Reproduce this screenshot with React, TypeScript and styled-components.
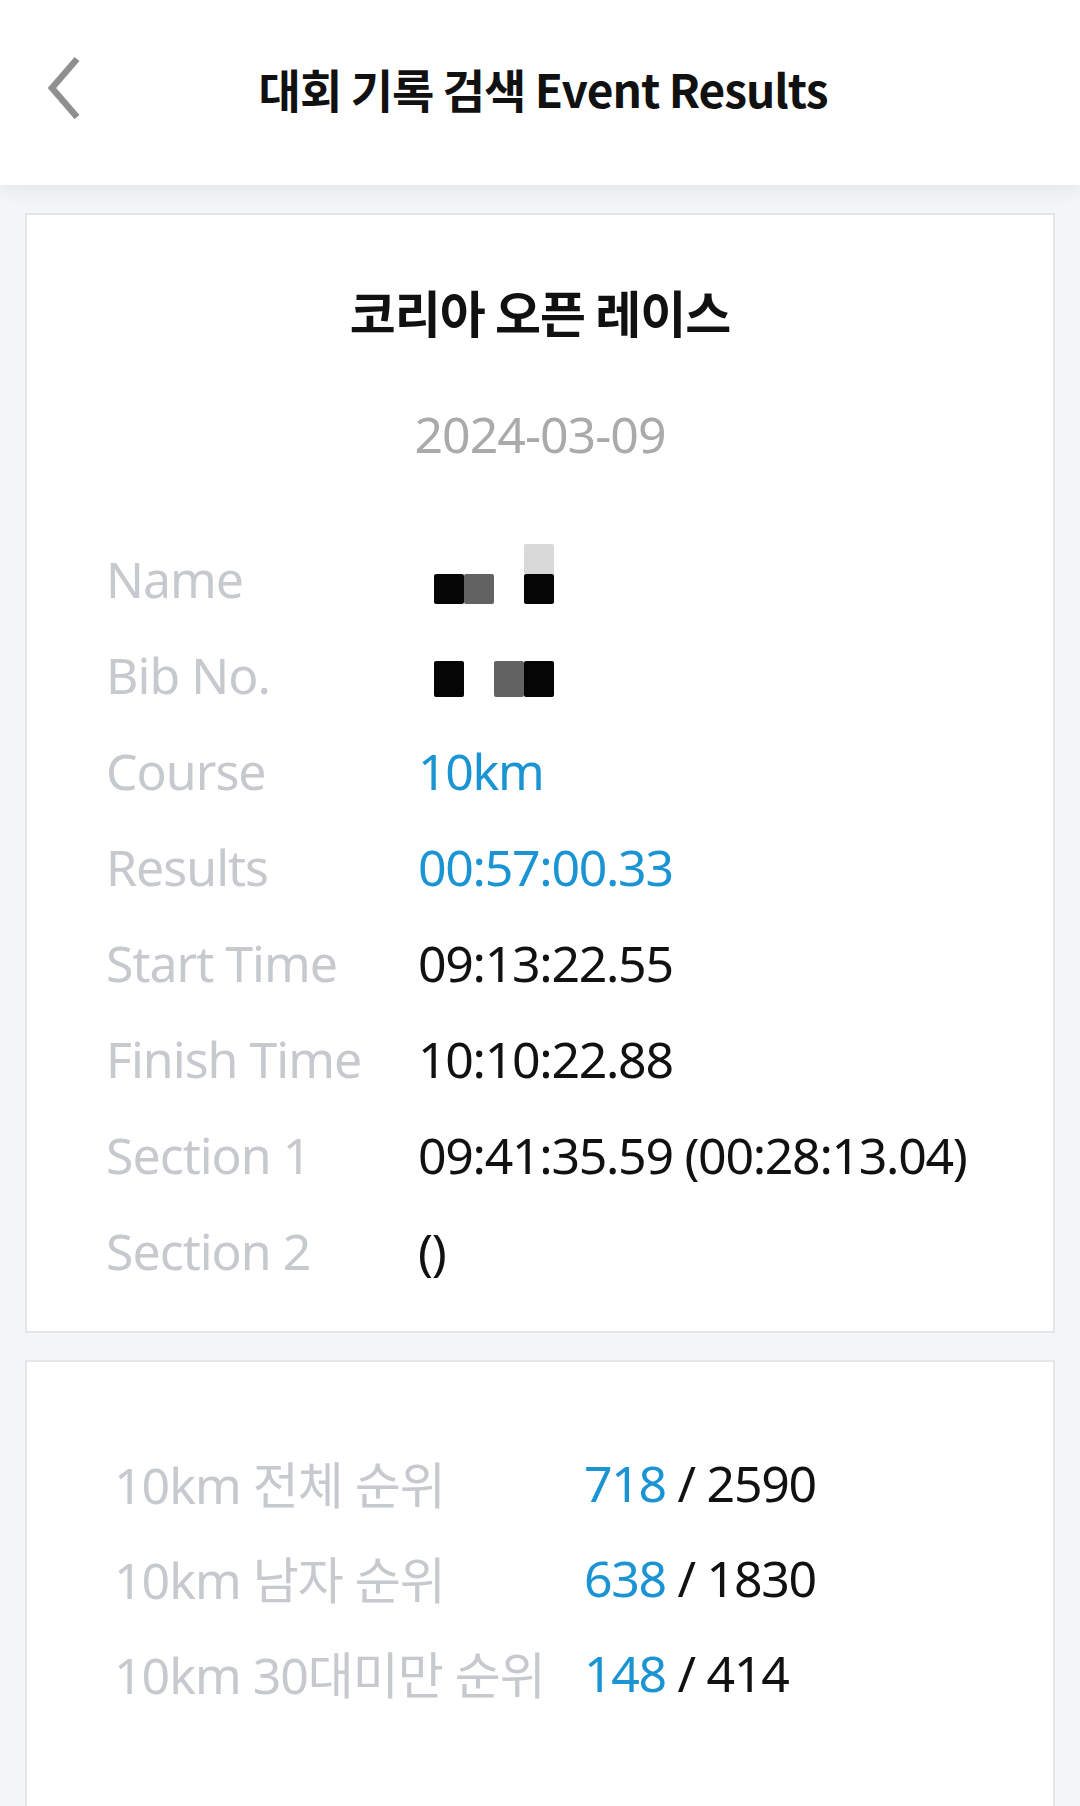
import React from "react";
import styled, { createGlobalStyle } from "styled-components";

const Global = createGlobalStyle`
  html, body { margin: 0; padding: 0; background: #f4f5f7; }
  body { font-family: "Noto Sans", "Noto Sans CJK KR", sans-serif; }
  * { box-sizing: border-box; }
`;

const Page = styled.div`
  width: 1080px;
  height: 1806px;
  overflow: hidden;
  background: #f4f5f7;
  display: flex;
  flex-direction: column;
  position: relative;
`;

const Header = styled.header`
  height: 185px;
  flex: none;
  background: #ffffff;
  display: flex;
  align-items: center;
  justify-content: center;
  padding-bottom: 10px;
  position: relative;
  z-index: 1;
  box-shadow: 0 6px 18px rgba(0, 0, 0, 0.06);
`;

const BackButton = styled.button`
  position: absolute;
  left: 38px;
  top: 50px;
  width: 52px;
  height: 74px;
  border: 0;
  padding: 0;
  background: transparent;
  display: flex;
  align-items: center;
  justify-content: center;
`;

const Title = styled.h1`
  margin: 0 0 0 6px;
  font-family: "Noto Sans CJK KR", "Noto Sans", sans-serif;
  font-weight: 700;
  font-size: 46px;
  letter-spacing: -1px;
  color: #111111;
`;

const Content = styled.main`
  display: flex;
  flex-direction: column;
  gap: 27px;
  padding: 28px 25px 0;
`;

const Card = styled.section<{ $pt: number; $pb: number; $pl: number; $grow?: boolean }>`
  background: #ffffff;
  border: 2px solid #e3e5e8;
  padding: ${(p) => p.$pt}px 0 ${(p) => p.$pb}px ${(p) => p.$pl}px;
  display: flex;
  flex-direction: column;
  ${(p) => (p.$grow ? "min-height: 560px; position: relative;" : "")}
`;

const EventName = styled.h2`
  margin: -4px 0 4px -79px;
  text-align: center;
  font-family: "Noto Sans CJK KR", "Noto Sans", sans-serif;
  font-weight: 700;
  font-size: 50px;
  line-height: 64px;
  letter-spacing: -1px;
  color: #111111;
`;

const EventDate = styled.div`
  margin: 55px 0 65px -79px;
  text-align: center;
  font-family: "Noto Sans", sans-serif;
  font-size: 50px;
  line-height: 64px;
  color: #aaaaaa;
  letter-spacing: -1px;
`;

const Row = styled.div<{ $h: number; $label: number }>`
  display: grid;
  grid-template-columns: ${(p) => p.$label}px 1fr;
  height: ${(p) => p.$h}px;
  align-items: center;
`;

const Label = styled.span`
  font-family: "Noto Sans", "Noto Sans CJK KR", sans-serif;
  font-size: 50px;
  color: #c6c9cd;
  letter-spacing: -1px;
  white-space: nowrap;
`;

const Value = styled.span<{ $blue?: boolean }>`
  font-family: "Noto Sans", "Noto Sans CJK KR", sans-serif;
  font-size: 50px;
  color: ${(p) => (p.$blue ? "#1a94d2" : "#111111")};
  letter-spacing: -1.3px;
  white-space: nowrap;
`;

const Rank = styled.span`
  color: #1a94d2;
`;

const Mosaic = styled.span<{ $rowH: number; $shift: number }>`
  display: grid;
  grid-template-columns: repeat(4, 30px);
  grid-auto-rows: ${(p) => p.$rowH}px;
  width: max-content;
  margin-top: ${(p) => p.$shift}px;
`;

const Cell = styled.span<{ $c: string }>`
  background: ${(p) => p.$c};
  border-radius: 2px;
`;

const BottomBand = styled.div`
  position: absolute;
  left: 0;
  right: 0;
  bottom: 0;
  height: 13px;
  background: #f8f8f9;
`;

const Chevron = () => (
  <svg width="40" height="64" viewBox="0 0 40 64">
    <polyline
      points="33,4 8,33 33,62"
      fill="none"
      stroke="#8f8f8f"
      strokeWidth="6.5"
      strokeLinecap="butt"
      strokeLinejoin="miter"
    />
  </svg>
);

const B = "#050505";
const G = "#626262";
const L = "#d9d9d9";
const N = "transparent";

const nameCells = [N, N, N, L, B, G, N, B];
const bibCells = [B, N, G, B];

const details: { label: string; value: React.ReactNode; blue?: boolean }[] = [
  { label: "Course", value: "10km", blue: true },
  { label: "Results", value: "00:57:00.33", blue: true },
  { label: "Start Time", value: "09:13:22.55" },
  { label: "Finish Time", value: "10:10:22.88" },
  { label: "Section 1", value: "09:41:35.59 (00:28:13.04)" },
  { label: "Section 2", value: "()" },
];

const ranks = [
  { label: "10km 전체 순위", rank: "718", total: "2590" },
  { label: "10km 남자 순위", rank: "638", total: "1830" },
  { label: "10km 30대미만 순위", rank: "148", total: "414" },
];

export default function App() {
  return (
    <Page>
      <Global />
      <Header>
        <BackButton aria-label="back">
          <Chevron />
        </BackButton>
        <Title>대회 기록 검색 Event Results</Title>
      </Header>
      <Content>
        <Card $pt={68} $pb={32} $pl={79}>
          <EventName>코리아 오픈 레이스</EventName>
          <EventDate>2024-03-09</EventDate>
          <Row $h={96} $label={328}>
            <Label>Name</Label>
            <Mosaic $rowH={30} $shift={-10}>
              {nameCells.map((c, i) => (
                <Cell key={i} $c={c} />
              ))}
            </Mosaic>
          </Row>
          <Row $h={96} $label={328}>
            <Label>Bib No.</Label>
            <Mosaic $rowH={36} $shift={8}>
              {bibCells.map((c, i) => (
                <Cell key={i} $c={c} />
              ))}
            </Mosaic>
          </Row>
          {details.map((d) => (
            <Row key={d.label} $h={96} $label={312}>
              <Label>{d.label}</Label>
              <Value $blue={d.blue}>{d.value}</Value>
            </Row>
          ))}
        </Card>
        <Card $pt={73} $pb={0} $pl={87} $grow>
          {ranks.map((r) => (
            <Row key={r.label} $h={95} $label={470}>
              <Label>{r.label}</Label>
              <Value>
                <Rank>{r.rank}</Rank> / {r.total}
              </Value>
            </Row>
          ))}
          <BottomBand />
        </Card>
      </Content>
    </Page>
  );
}
